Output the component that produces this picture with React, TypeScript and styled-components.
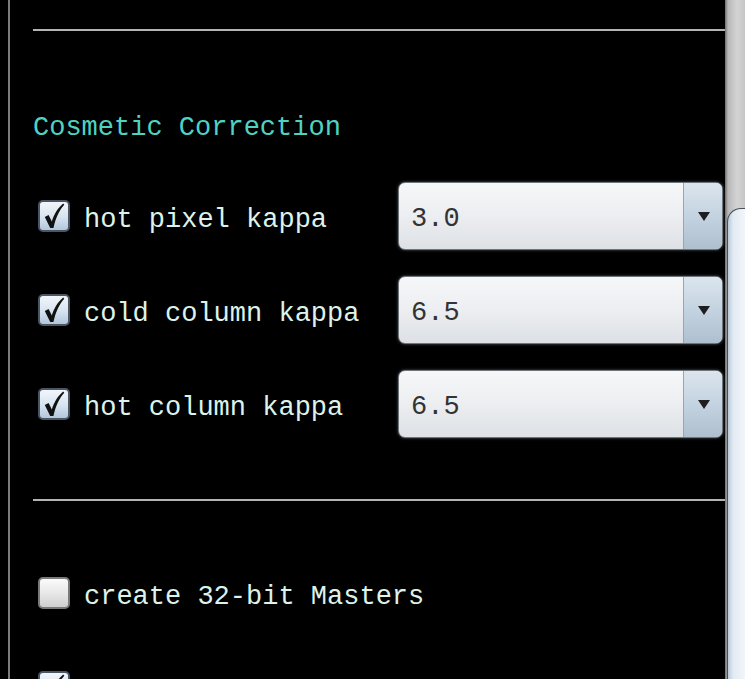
import React from "react";
import styled, { createGlobalStyle } from "styled-components";

const Global = createGlobalStyle`
  html, body { margin: 0; padding: 0; background: #000; }
  body { font-family: "Liberation Mono", "DejaVu Sans Mono", monospace; }
`;

const Frame = styled.div`
  display: flex;
  width: 745px;
  height: 679px;
  overflow: hidden;
  background: #000;
`;

const Panel = styled.div`
  flex: 1;
  margin-left: 8px;
  border-left: 2px solid #7c7c7c;
  padding: 29px 2px 0 23px;
  display: flex;
  flex-direction: column;
  & > * { flex-shrink: 0; }
`;

const Divider = styled.div<{ $top: number }>`
  height: 2px;
  background: #b4b4b4;
  margin-top: ${(p) => p.$top}px;
  margin-right: -2px;
`;

const Heading = styled.div`
  margin-top: 78px;
  height: 32px;
  line-height: 32px;
  padding-top: 3px;
  box-sizing: border-box;
  font-size: 27px;
  color: #4fd2c2;
  white-space: pre;
`;

const Rows = styled.div<{ $top: number }>`
  display: flex;
  flex-direction: column;
  gap: 26px;
  margin-top: ${(p) => p.$top}px;
  & > * { flex-shrink: 0; }
`;

const Row = styled.div`
  display: flex;
  align-items: center;
  height: 68px;
`;

const Box = styled.div<{ $checked: boolean }>`
  box-sizing: border-box;
  width: 32px;
  height: 32px;
  margin-left: 5px;
  border-radius: 5px;
  border: 2px solid ${(p) => (p.$checked ? "#4a5664" : "#7a7a7a")};
  background: ${(p) =>
    p.$checked
      ? "linear-gradient(#f2f6fb, #d6e3ef 55%, #b2c7db)"
      : "linear-gradient(#fbfbfb, #e6e6e6 55%, #cfcfcf)"};
  display: flex;
  align-items: center;
  justify-content: center;
  flex-shrink: 0;
`;

const Label = styled.span`
  margin-left: 14px;
  flex: 1;
  font-size: 27px;
  line-height: 32px;
  padding-top: 7px;
  color: #dcf2ea;
  white-space: pre;
`;

const Combo = styled.div`
  box-sizing: border-box;
  width: 325px;
  height: 68px;
  border-radius: 7px;
  border: 1px solid #6e747c;
  box-shadow: 0 0 3px rgba(160, 170, 180, 0.5);
  background: linear-gradient(#f6f7f9, #eceef1 50%, #dde0e5);
  display: flex;
  overflow: hidden;
`;

const ComboValue = styled.span`
  flex: 1;
  padding-left: 12px;
  padding-top: 6px;
  display: flex;
  align-items: center;
  font-size: 27px;
  color: #333;
`;

const ComboButton = styled.div`
  width: 38px;
  border-left: 1px solid #98a6b3;
  background: linear-gradient(#dbe5ee, #c4d3e1 50%, #aebfcf);
  display: flex;
  align-items: center;
  justify-content: center;
`;

const Arrow = styled.div`
  width: 0;
  height: 0;
  border-left: 6px solid transparent;
  border-right: 6px solid transparent;
  border-top: 9px solid #1e1e1e;
  margin-left: 2px;
`;

const Scrollbar = styled.div`
  width: 20px;
  display: flex;
  flex-direction: column;
  background: linear-gradient(to right, #6e6e6e, #b8b8b8 15%, #d4d4d4 60%, #c6c6c6);
`;

const Track = styled.div`
  height: 208px;
  flex-shrink: 0;
`;

const Thumb = styled.div`
  flex: 1;
  margin-left: 2px;
  border-top: 1px solid #44505c;
  border-left: 1px solid #44505c;
  border-top-left-radius: 14px;
  background: linear-gradient(to right, #b9c9d8, #e2eaf2 30%, #f2f6fa);
`;

const Check = () => (
  <svg width="24" height="26" viewBox="0 0 22 24">
    <path
      d="M2.5 13 L6 11 L9 17 C11 11 14 5 19.5 0.5 L20.5 1.5 C15.5 7 12.5 14 10.5 23 L7.5 23 Z"
      fill="#111"
    />
  </svg>
);

type OptionProps = { label?: string; checked: boolean; value?: string };

const Option = ({ label, checked, value }: OptionProps) => (
  <Row>
    <Box $checked={checked}>{checked && <Check />}</Box>
    <Label>{label}</Label>
    {value !== undefined && (
      <Combo>
        <ComboValue>{value}</ComboValue>
        <ComboButton>
          <Arrow />
        </ComboButton>
      </Combo>
    )}
  </Row>
);

export default function App() {
  return (
    <>
      <Global />
      <Frame>
        <Panel>
          <Divider $top={0} />
          <Heading>Cosmetic Correction</Heading>
          <Rows $top={41}>
            <Option label="hot pixel kappa" checked value="3.0" />
            <Option label="cold column kappa" checked value="6.5" />
            <Option label="hot column kappa" checked value="6.5" />
          </Rows>
          <Divider $top={61} />
          <Rows $top={58}>
            <Option label="create 32-bit Masters" checked={false} />
            <Option checked />
          </Rows>
        </Panel>
        <Scrollbar>
          <Track />
          <Thumb />
        </Scrollbar>
      </Frame>
    </>
  );
}
